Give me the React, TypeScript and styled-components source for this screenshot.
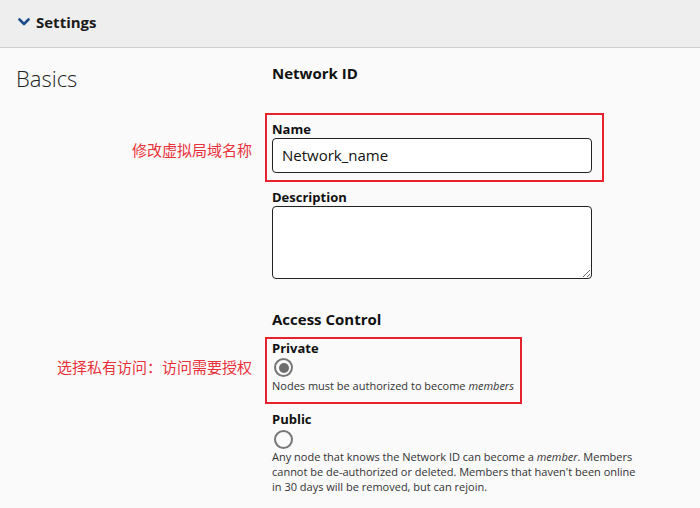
import React from "react";
import styled, { createGlobalStyle } from "styled-components";

const Global = createGlobalStyle`
  html, body { margin: 0; padding: 0; background: #fafafa; }
  body { font-family: "Open Sans", "Noto Sans", sans-serif; color: #111; }
  * { box-sizing: border-box; }
`;

const Page = styled.div`
  width: 700px;
  height: 508px;
  overflow: hidden;
  background: #fafafa;
`;

const Header = styled.div`
  height: 48px;
  background: #eeeeee;
  border-bottom: 1px solid #cfcfcf;
  display: flex;
  align-items: center;
  gap: 6px;
  padding: 0 0 4px 18px;
`;

const HeaderTitle = styled.span`
  font-size: 15px;
  font-weight: 700;
  color: #1a1a1a;
`;

const Body = styled.div`
  display: grid;
  grid-template-columns: 265px 1fr;
  align-items: center;
`;

const Basics = styled.div`
  font-size: 22px;
  font-weight: 300;
  color: #222;
  padding-left: 16px;
  align-self: start;
  padding-top: 15px;
`;

const Note = styled.div<{ $top: number; $pt?: number; $pb?: number }>`
  font-family: "Noto Sans CJK SC", sans-serif;
  font-size: 15px;
  color: #e8313b;
  text-align: right;
  padding-right: 13px;
  margin-top: ${(p) => p.$top}px;
  padding-top: ${(p) => p.$pt ?? 0}px;
  padding-bottom: ${(p) => p.$pb ?? 0}px;
`;

const Section = styled.div<{ $top?: number; $start?: boolean }>`
  padding-left: 7px;
  margin-top: ${(p) => p.$top ?? 0}px;
  grid-column: 2;
  align-self: ${(p) => (p.$start ? "start" : "center")};
`;

const RedBox = styled.div<{ $w: number; $top: number; $pad: string }>`
  width: ${(p) => p.$w}px;
  border: 2px solid #e8212e;
  padding: ${(p) => p.$pad};
  margin-top: ${(p) => p.$top}px;
`;

const SectionTitle = styled.div`
  font-size: 15px;
  font-weight: 700;
  line-height: 20px;
`;

const Label = styled.div`
  font-size: 13px;
  font-weight: 700;
  line-height: 18px;
`;

const TextInput = styled.input`
  display: block;
  width: 320px;
  height: 35px;
  border: 1px solid #222;
  border-radius: 4px;
  background: #fff;
  font-family: "Open Sans", sans-serif;
  font-size: 15px;
  padding: 0 9px 2px 9px;
  color: #111;
  outline: none;
`;

const TextArea = styled.textarea`
  display: block;
  width: 320px;
  height: 73px;
  border: 1px solid #222;
  border-radius: 4px;
  background: #fff;
  margin: 0;
  font-family: "Open Sans", sans-serif;
`;

const Radio = styled.span<{ $checked?: boolean; $mt: number; $mb: number }>`
  display: flex;
  align-items: center;
  justify-content: center;
  width: 19px;
  height: 19px;
  border-radius: 50%;
  border: 2px solid #777;
  margin: ${(p) => p.$mt}px 0 ${(p) => p.$mb}px 2px;
  &::after {
    content: "";
    width: 10px;
    height: 10px;
    border-radius: 50%;
    background: ${(p) => (p.$checked ? "#6e6e6e" : "transparent")};
  }
`;

const Help = styled.div`
  font-size: 11px;
  line-height: 15px;
  color: #333;
  width: 365px;
`;

const Chevron = () => (
  <svg width="12" height="8" viewBox="0 0 12 8">
    <path d="M1.5 1.5 L6 6 L10.5 1.5" fill="none" stroke="#1d4f8f" strokeWidth="2.6" strokeLinecap="round" strokeLinejoin="round" />
  </svg>
);

export default function App() {
  return (
    <Page>
      <Global />
      <Header>
        <Chevron />
        <HeaderTitle>Settings</HeaderTitle>
      </Header>
      <Body>
        <Basics>Basics</Basics>
        <Section $top={15} $start>
          <SectionTitle>Network ID</SectionTitle>
        </Section>

        <Note $top={20} $pt={3}>修改虚拟局域名称</Note>
        <RedBox $w={339} $top={20} $pad="5px 5px 7px 5px">
          <Label>Name</Label>
          <TextInput defaultValue="Network_name" />
        </RedBox>

        <Section $top={6}>
          <Label>Description</Label>
          <TextArea />
        </Section>

        <Section $top={30}>
          <SectionTitle>Access Control</SectionTitle>
        </Section>

        <Note $top={8} $pb={8}>选择私有访问：访问需要授权</Note>
        <RedBox $w={257} $top={8} $pad="0 5px 9px 5px">
          <Label>Private</Label>
          <Radio $checked $mt={1} $mb={1} />
          <Help>
            Nodes must be authorized to become <i>members</i>
          </Help>
        </RedBox>

        <Section $top={6}>
          <Label>Public</Label>
          <Radio $mt={2} $mb={0} />
          <Help>
            Any node that knows the Network ID can become a <i>member</i>. Members cannot be de-authorized or deleted. Members that haven't been online in 30 days will be removed, but can rejoin.
          </Help>
        </Section>
      </Body>
    </Page>
  );
}
